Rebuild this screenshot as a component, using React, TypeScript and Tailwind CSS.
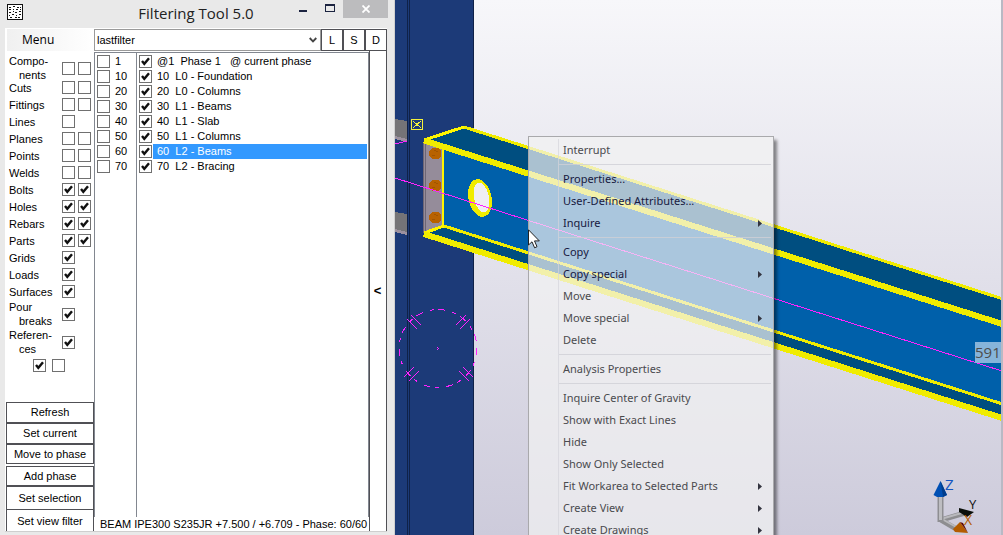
import { ReactNode } from 'react';

function Check({ checked = false, label }: { checked?: boolean; label: string }) {
  return (
    <span className="grid size-[13px] shrink-0">
      <input
        type="checkbox"
        aria-label={label}
        defaultChecked={checked}
        className="peer col-start-1 row-start-1 size-[13px] appearance-none border border-[#707070] bg-white"
      />
      <svg
        viewBox="0 0 13 13"
        className="pointer-events-none invisible col-start-1 row-start-1 size-[13px] peer-checked:visible"
      >
        <path d="M3 6 L5.3 8.8 L10 3.2" fill="none" stroke="#111" strokeWidth="2.4" />
      </svg>
    </span>
  );
}

type Filter = { name: string; rest?: string; boxes: boolean[] };

const filters: Filter[] = [
  { name: 'Compo-', rest: 'nents', boxes: [false, false] },
  { name: 'Cuts', boxes: [false, false] },
  { name: 'Fittings', boxes: [false, false] },
  { name: 'Lines', boxes: [false] },
  { name: 'Planes', boxes: [false, false] },
  { name: 'Points', boxes: [false, false] },
  { name: 'Welds', boxes: [false, false] },
  { name: 'Bolts', boxes: [true, true] },
  { name: 'Holes', boxes: [true, true] },
  { name: 'Rebars', boxes: [true, true] },
  { name: 'Parts', boxes: [true, true] },
  { name: 'Grids', boxes: [true] },
  { name: 'Loads', boxes: [true] },
  { name: 'Surfaces', boxes: [true] },
  { name: 'Pour', rest: 'breaks', boxes: [true] },
  { name: 'Referen-', rest: 'ces', boxes: [true] },
];

const phases = [
  { id: '1', text: '@1  Phase 1   @ current phase' },
  { id: '10', text: '10  L0 - Foundation' },
  { id: '20', text: '20  L0 - Columns' },
  { id: '30', text: '30  L1 - Beams' },
  { id: '40', text: '40  L1 - Slab' },
  { id: '50', text: '50  L1 - Columns' },
  { id: '60', text: '60  L2 - Beams', selected: true },
  { id: '70', text: '70  L2 - Bracing' },
];

function SideButton({ children, size = 'h-5' }: { children: ReactNode; size?: string }) {
  return (
    <button className={`${size} shrink-0 border border-[#505055] bg-white text-center`}>
      {children}
    </button>
  );
}

function TitleBar() {
  return (
    <header className="flex h-7 shrink-0 items-start pl-[7px] pr-[6px]">
      <svg viewBox="0 0 16 16" className="mt-1 size-4" shapeRendering="crispEdges">
        <rect x="0.5" y="0.5" width="15" height="15" fill="#fff" stroke="#111" />
        <path
          d="M2 3.5h3M6 2.5h2M10 3.5h4M2 5.5h2M6 5.5h1M9 5.5h2M13 5.5h1M2 8.5h3M6 7.5h1M8 8.5h2M12 7.5h2M2 11.5h1M5 10.5h2M9 11.5h1M12 10.5h2M3 13.5h3M8 13.5h2M11 13.5h3"
          stroke="#111"
          strokeDasharray="2 1"
        />
      </svg>
      <h1 className="flex-1 pl-20 pt-[3px] text-center font-['Open_Sans'] text-[15px] leading-5 text-[#222]">
        Filtering Tool 5.0
      </h1>
      <div className="flex items-start">
        <button aria-label="Minimize" className="grid h-[18px] w-7 place-items-center">
          <svg viewBox="0 0 10 10" className="size-[10px]" shapeRendering="crispEdges">
            <rect x="1" y="6" width="8" height="2" fill="#1b2340" />
          </svg>
        </button>
        <button aria-label="Maximize" className="grid h-4 w-[26px] place-items-center">
          <svg viewBox="0 0 10 8" className="h-2 w-[10px]" shapeRendering="crispEdges">
            <path d="M0 0h10v8H0zM1 2h8v5H1z" fillRule="evenodd" fill="#1b2340" />
          </svg>
        </button>
        <button aria-label="Close" className="grid h-[18px] w-[45px] place-items-center bg-[#bcbcbe]">
          <svg viewBox="0 0 8 8" className="size-2">
            <path d="M0.5 0.5l7 7M7.5 0.5l-7 7" stroke="#fff" strokeWidth="1.8" />
          </svg>
        </button>
      </div>
    </header>
  );
}

function FilterTool() {
  return (
    <section className="flex w-[395px] shrink-0 flex-col border-r border-[#d0d0d0] bg-[#e9e9e9] font-['Liberation_Sans',sans-serif] text-[11px] text-black">
      <TitleBar />
      <div className="mb-[3px] ml-[5px] mr-[7px] flex min-h-0 flex-1 border-b border-[#cfcfcf] bg-white">
        <div className="flex w-[89px] shrink-0 flex-col">
          <button className="ml-[2px] mt-px h-[22px] shrink-0 bg-linear-to-r from-[#f0f0f0] to-white pl-[15px] text-left font-['Open_Sans'] text-[12px] leading-[22px]">
            Menu
          </button>
          <ul className="flex flex-col pl-1 pt-[3px]">
            {filters.map((f) => (
              <li key={f.name} className={f.rest ? 'h-7 first:h-[25px]' : 'h-[17px]'}>
                <div className={f.rest ? 'flex h-7 items-center' : 'flex h-[17px] items-center'}>
                  <span className={f.rest ? 'w-[53px] leading-[14px]' : 'w-[53px] pt-[2px]'}>
                    {f.name}
                    {f.rest && <span className="block pl-[10px]">{f.rest}</span>}
                  </span>
                  <span className="flex gap-[3px]">
                    {f.boxes.map((on, i) => (
                      <Check key={i} checked={on} label={`${f.name} ${i + 1}`} />
                    ))}
                  </span>
                </div>
              </li>
            ))}
          </ul>
          <div className="flex gap-[6px] pl-7 pt-[3px]">
            <Check checked label="All first" />
            <Check label="All second" />
          </div>
          <div className="mt-auto flex flex-col pl-px">
            <SideButton size="h-[21px]">Refresh</SideButton>
            <SideButton size="h-[21px]">Set current</SideButton>
            <SideButton>Move to phase</SideButton>
            <span className="h-[2px]" />
            <SideButton>Add phase</SideButton>
            <SideButton size="h-6">Set selection</SideButton>
            <button className="h-[21px] shrink-0 border-x border-[#505055] bg-white pt-[2px] text-center">
              Set view filter
            </button>
          </div>
        </div>
        <div className="flex min-w-0 flex-1 flex-col">
          <div className="flex h-[23px] shrink-0 pt-px">
            <select
              aria-label="Filter"
              className="h-[22px] min-w-0 flex-1 appearance-none border border-[#9a9a9a] bg-white pl-[2px]"
            >
              <option>lastfilter</option>
            </select>
            <svg viewBox="0 0 8 6" className="pointer-events-none -ml-3 mr-1 mt-2 h-[6px] w-2">
              <path d="M0.7 1 L4 4.4 L7.3 1" fill="none" stroke="#444" strokeWidth="1.8" />
            </svg>
            {['L', 'S', 'D'].map((c) => (
              <button key={c} className="h-[22px] w-[22px] border border-[#505055] bg-white">
                {c}
              </button>
            ))}
          </div>
          <div className="flex min-h-0 flex-1">
            <div className="flex min-w-0 flex-1 flex-col pt-px">
              <div className="flex min-h-0 flex-1 border border-b-0 border-[#828790]">
                <ul className="w-[42px] shrink-0 border-r border-[#828790] pl-[2px] pt-px">
                  {phases.map((p) => (
                    <li key={p.id} className="flex h-[15px] items-center gap-[5px]">
                      <Check label={`Pick phase ${p.id}`} />
                      {p.id}
                    </li>
                  ))}
                </ul>
                <ul className="min-w-0 flex-1 pl-[2px] pr-px pt-px">
                  {phases.map((p) => (
                    <li key={p.id} className="flex h-[15px] items-center gap-px">
                      <Check checked label={`Show phase ${p.id}`} />
                      <span
                        className={
                          p.selected
                            ? 'flex-1 whitespace-pre bg-[#3399ff] pl-1 leading-[15px] text-white'
                            : 'flex-1 whitespace-pre pl-1 leading-[15px]'
                        }
                      >
                        {p.text}
                      </span>
                    </li>
                  ))}
                </ul>
              </div>
              <p className="h-[14px] shrink-0 whitespace-nowrap pl-[6px] leading-[14px]">
                BEAM IPE300 S235JR +7.500 / +6.709 - Phase: 60/60
              </p>
            </div>
            <button className="w-[18px] shrink-0 border-x border-[#505055] bg-white pr-px text-[13px] font-bold">
              &lt;
            </button>
          </div>
        </div>
      </div>
    </section>
  );
}

const bolts = [153, 185, 217];

function Model() {
  return (
    <svg className="absolute inset-0 size-full" shapeRendering="crispEdges">
      <g transform="translate(-395 0)">
        <rect x="395" y="0" width="79" height="2000" fill="#1c3a78" />
        <path d="M407.5 0V2000M409.5 0V2000M473.5 0V2000" stroke="#0f2148" />
        {[0, 93].map((dy) => (
          <g key={dy} transform={`translate(0 ${dy})`}>
            <path d="M395 119L407 121V141L395 138Z" fill="#757477" />
            <path d="M395 136L407 139V142L395 139Z" fill="#9c919f" />
          </g>
        ))}
        <path d="M395 144L407 141" stroke="#ff22ff" />
        <path d="M411.5 119.5H422.5V129.5H411.5Z" fill="none" stroke="#f4f13c" />
        <path d="M413 121L421 128M421 121L413 128" stroke="#f4f13c" />

        <path d="M424 140L464 127L1464 445V464L464 155Z" fill="#004e80" />
        <path d="M443 148L1464 472V560L443 228Z" fill="#0060aa" />
        <path d="M424 234L444 226L1464 551V565Z" fill="#004e80" />
        <path d="M423 142L443 149V226L423 233Z" fill="#958c9a" />
        <path d="M423.5 142V233M425.5 142V233" stroke="#6d6675" />
        {bolts.map((y) => (
          <g key={y}>
            <path d={`M432 ${y - 5}h6l3 3v5l-3 3h-6l-3-3v-5z`} fill="#b86200" />
            <path d={`M432 ${y + 2}h3M436 ${y - 2}h2M434 ${y - 3}h2`} stroke="#a05400" />
          </g>
        ))}
        <path d="M443 149V227" stroke="#fff600" strokeWidth="2" />
        <path d="M424 140L464 127" stroke="#fff600" strokeWidth="3" />
        <path d="M464 127L1464 446" stroke="#f0ec00" strokeWidth="3" />
        <path d="M424 140.500L1464 470.500" stroke="#f0ec00" strokeWidth="6" />
        <path d="M424 233L444 226" stroke="#fff600" strokeWidth="3" />
        <path d="M444 226L1464 551" stroke="#f0ec00" strokeWidth="3" />
        <path d="M424 234L1464 565" stroke="#f0ec00" strokeWidth="6" />
        <ellipse cx="480" cy="198" rx="11.500" ry="19" transform="rotate(-12 480 198)" fill="#f0ec00" />
        <ellipse cx="481.500" cy="197.500" rx="7.500" ry="15" transform="rotate(-12 481.500 197.500)" fill="#efeef4" />
        <path d="M395 178L1395 496" stroke="#ff22ff" />

        <circle cx="438" cy="348.500" r="39" fill="none" stroke="#ff22ff" strokeDasharray="7 7 4 5" />
        <path
          d="M411 315L421 325M407 319L417 329M456 325L466 315M460 329L470 319M404 377L414 367M409 381L419 371M459 371L469 381M463 367L473 377M437 347.500h1M438 348.500h1M437 349.500h1"
          fill="none"
          stroke="#ff22ff"
        />
      </g>
    </svg>
  );
}

function Axes() {
  return (
    <svg
      viewBox="0 0 50 60"
      className="absolute bottom-0 right-[18px] h-[60px] w-[50px]"
      fontFamily="Open Sans, sans-serif"
    >
      <path d="M8 45L32 38M8 45L25 55" stroke="#8d8d90" strokeWidth="5" />
      <path d="M8 44L32 37M9 44L25 53" stroke="#b9b9bd" strokeWidth="2" />
      <path d="M7.500 19V47" stroke="#8e8e92" strokeWidth="6" />
      <path d="M7.500 19V45" stroke="#bdbdc1" strokeWidth="3" />
      <path d="M7.500 6L14 20L10 22H4L0.500 20Z" fill="#0050b4" />
      <path d="M7.500 6L14 20L10 22Z" fill="#003d8c" />
      <path d="M26 33L41 37L34 42L26 37Z" fill="#0a0f0a" />
      <path d="M20 54L27 47L35 58L22 57Z" fill="#b45c00" />
      <path d="M27 47L30 48L35 58Z" fill="#5c0808" />
      <text x="12" y="15" fontSize="15" fill="#1455c0">Z</text>
      <text x="36" y="34" fontSize="13" fill="#111">Y</text>
      <text x="31" y="50" fontSize="14" fill="#b45c00">X</text>
    </svg>
  );
}

type Item = { text: string; sub?: boolean; strong?: boolean };

const menuGroups: Item[][] = [
  [{ text: 'Interrupt' }],
  [
    { text: 'Properties...', strong: true },
    { text: 'User-Defined Attributes...', strong: true },
    { text: 'Inquire', sub: true, strong: true },
  ],
  [
    { text: 'Copy', strong: true },
    { text: 'Copy special', sub: true, strong: true },
    { text: 'Move' },
    { text: 'Move special', sub: true },
    { text: 'Delete' },
  ],
  [{ text: 'Analysis Properties' }],
  [
    { text: 'Inquire Center of Gravity' },
    { text: 'Show with Exact Lines' },
    { text: 'Hide' },
    { text: 'Show Only Selected' },
    { text: 'Fit Workarea to Selected Parts', sub: true },
    { text: 'Create View', sub: true },
    { text: 'Create Drawings', sub: true },
  ],
];

function ContextMenu() {
  return (
    <nav className="absolute left-[133px] top-[136px] w-[246px] border border-[#a9a9ac] bg-[#f2f2f2]/70 pb-1 pl-[29px] pr-[2px] pt-[2px] font-['Noto_Sans'] text-[11px] shadow-[3px_4px_3px_rgba(0,0,0,0.45)]">
      <div className="border-l border-[#d4d4dc]/70">
        {menuGroups.map((group, g) => (
          <ul
            key={g}
            className={g ? 'mt-[3px] border-t border-[#cfcfd6]/80 pt-[3px]' : ''}
          >
            {group.map((item) => (
              <li key={item.text}>
                <button
                  className={
                    item.strong
                      ? 'flex h-[22px] w-full items-center justify-between whitespace-nowrap pl-1 pr-[9px] text-[#17193f]'
                      : 'flex h-[22px] w-full items-center justify-between whitespace-nowrap pl-1 pr-[9px] text-[#4a4a4e]'
                  }
                >
                  {item.text}
                  {item.sub && (
                    <svg viewBox="0 0 4 7" className="h-[7px] w-1">
                      <path d="M0 0L4 3.500L0 7Z" fill="#33343f" />
                    </svg>
                  )}
                </button>
              </li>
            ))}
          </ul>
        ))}
      </div>
    </nav>
  );
}

export default function App() {
  return (
    <main className="flex h-screen overflow-hidden">
      <FilterTool />
      <div className="relative min-w-0 flex-1 overflow-hidden border-r-2 border-[#b9b9c4] bg-linear-to-b from-[#f7f7fa] to-[#cdcbdb]">
        <Model />
        <ContextMenu />
        <svg viewBox="0 0 12 20" className="absolute left-[133px] top-[229px] h-5 w-3">
          <path
            d="M0.500 0.800V16L4 12.800L6.600 18.800L9 17.700L6.500 11.900H11.300Z"
            fill="#fff"
            stroke="#222"
          />
        </svg>
        <span className="absolute right-0 top-[342px] h-[21px] w-[26px] overflow-hidden whitespace-nowrap bg-[#86b4da] font-['Open_Sans'] text-[15px] leading-[21px] text-[#4c4c4c]">
          5919
        </span>
        <Axes />
      </div>
    </main>
  );
}
